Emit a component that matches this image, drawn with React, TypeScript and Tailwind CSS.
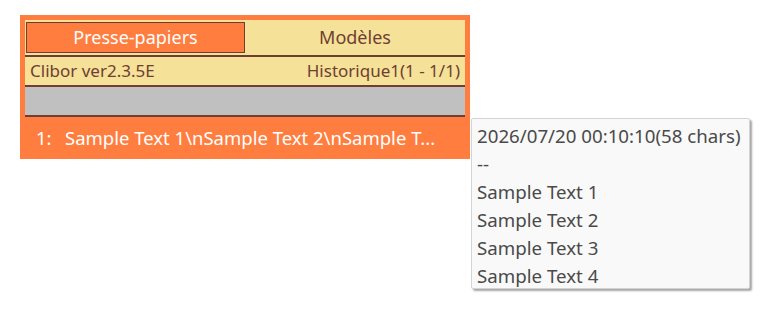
import React from "react";

const lines = [
  "2026/07/20 00:10:10(58 chars)",
  "--",
  "Sample Text 1",
  "Sample Text 2",
  "Sample Text 3",
  "Sample Text 4",
];

const font = { fontFamily: '"Segoe UI", "Noto Sans", sans-serif' };

export default function App() {
  return (
    <div className="relative w-[766px] h-[309px] bg-white" style={font}>
      <div className="absolute left-[20px] top-[15px] w-[450px] bg-[#ff7d3e]">
        <div className="px-[5px] pt-[5px]">
          {/* tabs */}
          <div className="flex h-[35px] bg-[#f5e197] pl-[1px] pt-[2px]">
            <div className="flex h-[31px] w-[219px] items-center justify-center border border-[#6e3e34] bg-[#ff7d3e] text-[18px] text-white">
              Presse-papiers
            </div>
            <div className="flex h-[31px] flex-1 items-center justify-center text-[18px] text-[#6e3e34]">
              Modèles
            </div>
          </div>
          <div className="h-[2px] bg-[#6e3e34]" />
          <div className="flex h-[28px] items-center justify-between bg-[#f5e197] px-[5px] text-[17px] text-[#6e3e34]">
            <span>Clibor ver2.3.5E</span>
            <span>Historique1(1 - 1/1)</span>
          </div>
          <div className="h-[2px] bg-[#6e3e34]" />
          <div className="h-[28px] bg-[#c0c0c0]" />
          <div className="h-[2px] bg-[#6e3e34]" />
        </div>
        <div className="flex h-[42px] items-center pl-[16px] text-[18.5px] text-white">
          <span className="w-[29px]">1:</span>
          <span>Sample Text 1\nSample Text 2\nSample T...</span>
        </div>
      </div>

      {/* tooltip */}
      <div className="absolute left-[471px] top-[118px] w-[279px] h-[171px] rounded-[2px] border border-[#d4d4d4] bg-[#f9f9f9] px-[5px] pt-[3px] shadow-[2px_2px_2px_rgba(0,0,0,0.35)]">
        {lines.map((l, i) => (
          <div key={i} className="h-[28px] leading-[28px] text-[18.7px] text-[#4a4a4a] whitespace-nowrap">
            {l}
          </div>
        ))}
      </div>
    </div>
  );
}
